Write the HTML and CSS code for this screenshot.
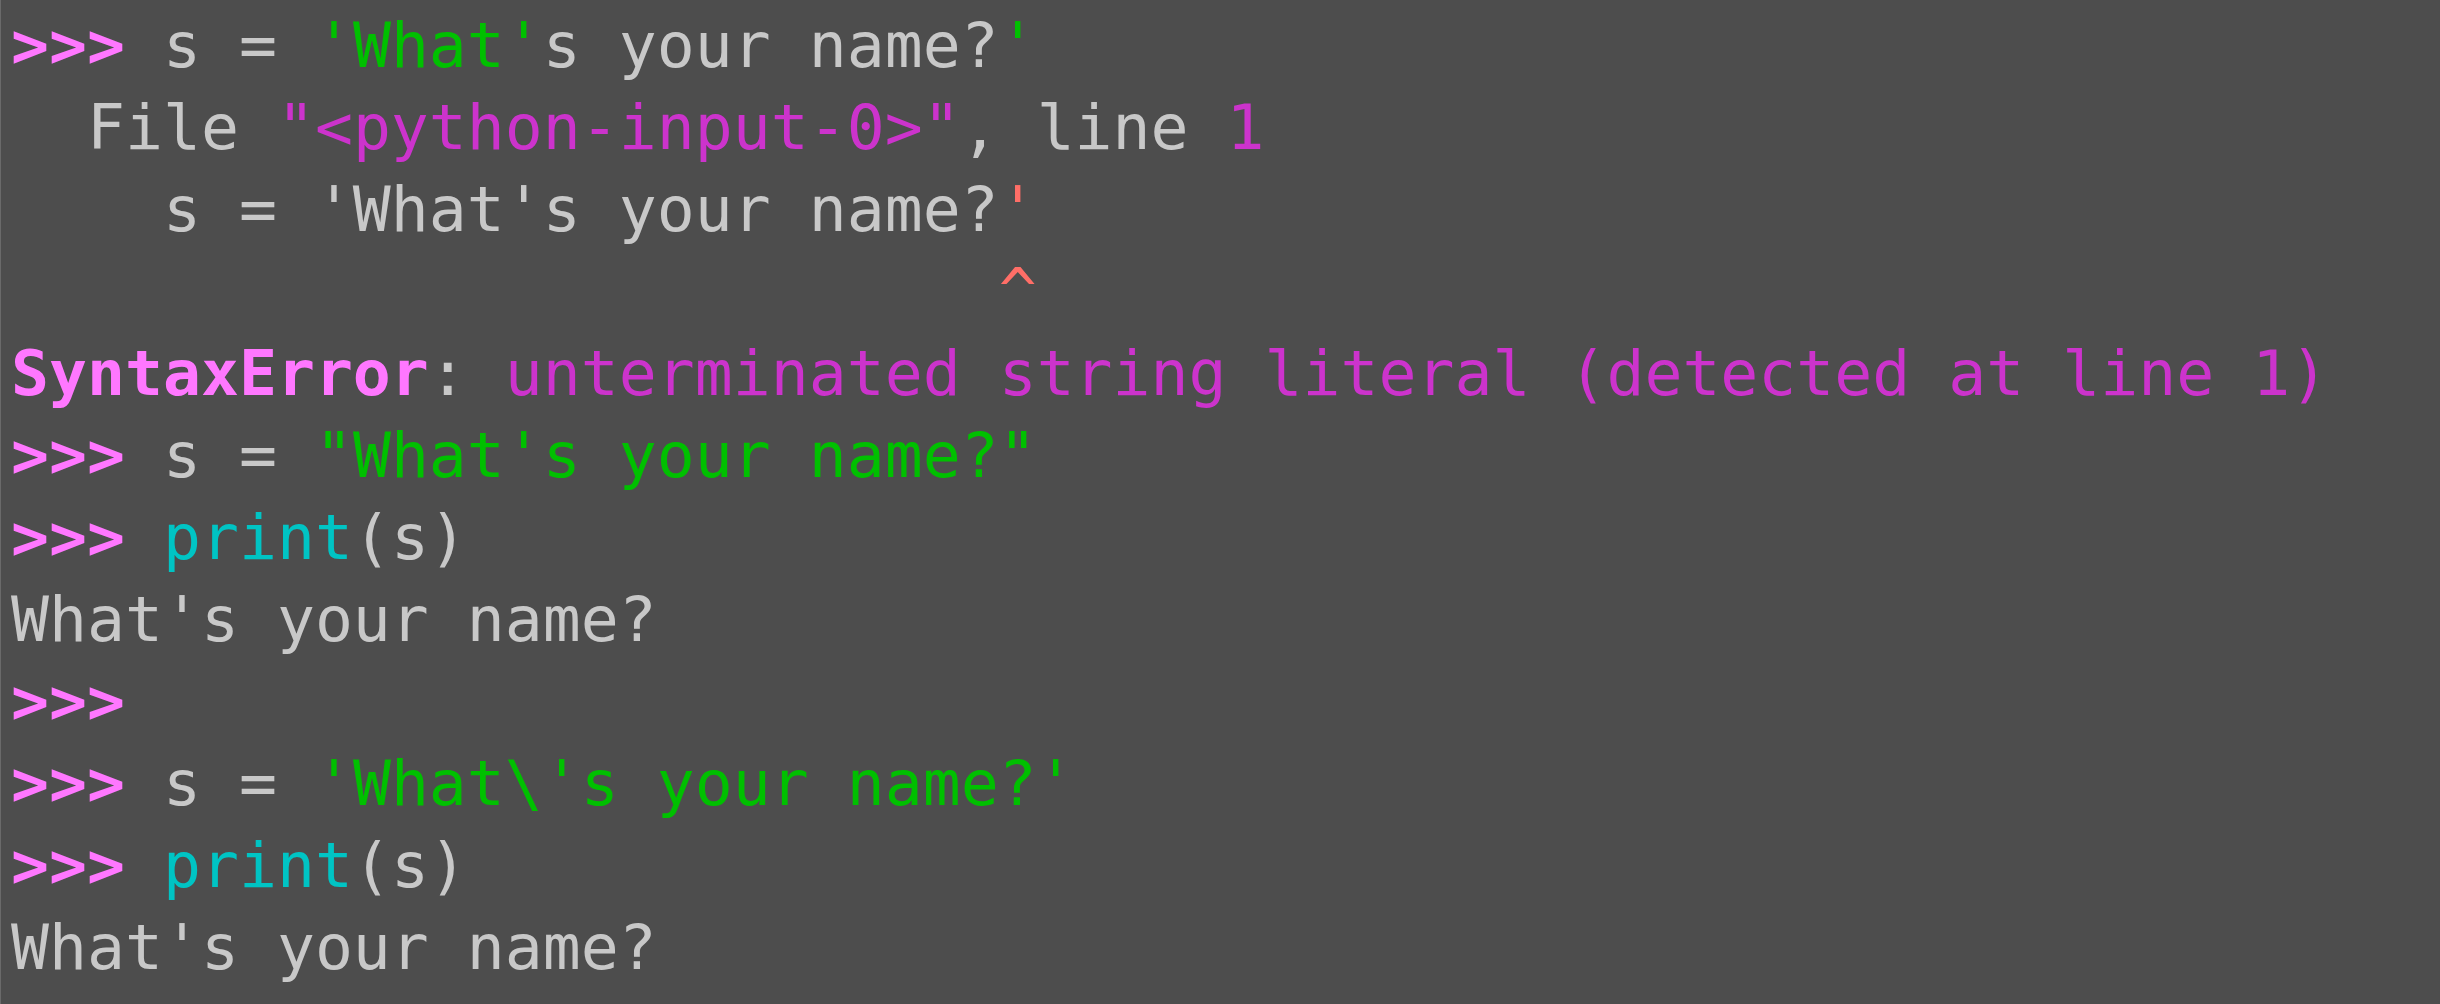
FILE: index.html
```html
<!DOCTYPE html>
<html>
<head>
<meta charset="utf-8">
<link rel="stylesheet" href="styles.css">
</head>
<body>
<main class="term">
<div class="line"><span class="ps">&gt;&gt;&gt;</span> s = <span class="str">'What'</span>s your name?<span class="str">'</span></div>
<div class="line">  File <span class="mag">"&lt;python-input-0&gt;"</span>, line <span class="mag">1</span></div>
<div class="line">    s = 'What's your name?<span class="err">'</span></div>
<div class="line">                          <span class="err">^</span></div>
<div class="line"><span class="ps">SyntaxError</span>: <span class="mag">unterminated string literal (detected at line 1)</span></div>
<div class="line"><span class="ps">&gt;&gt;&gt;</span> s = <span class="str">"What's your name?"</span></div>
<div class="line"><span class="ps">&gt;&gt;&gt;</span> <span class="fn">print</span>(s)</div>
<div class="line">What's your name?</div>
<div class="line"><span class="ps">&gt;&gt;&gt;</span> </div>
<div class="line"><span class="ps">&gt;&gt;&gt;</span> s = <span class="str">'What\'s your name?'</span></div>
<div class="line"><span class="ps">&gt;&gt;&gt;</span> <span class="fn">print</span>(s)</div>
<div class="line">What's your name?</div>
</main>
</body>
</html>
```
FILE: styles.css
```css
html, body {
  margin: 0;
  padding: 0;
  background: #4d4d4d;
}
.term {
  box-sizing: border-box;
  height: 1004px;
  border-left: 1px solid #6a6a6a;
  padding: 4px 0 0 10px;
  background: #4d4d4d;
  color: #c8c8c8;
  font-family: "DejaVu Sans Mono", monospace;
  font-size: 63.1px;
  line-height: 82px;
  overflow: hidden;
}
.line {
  white-space: pre;
  height: 82px;
}
.ps { color: #ff77ff; font-weight: bold; }
.str { color: #00c000; }
.mag { color: #cc33cc; }
.err { color: #ff6e67; }
.fn { color: #00c4c4; }
```
